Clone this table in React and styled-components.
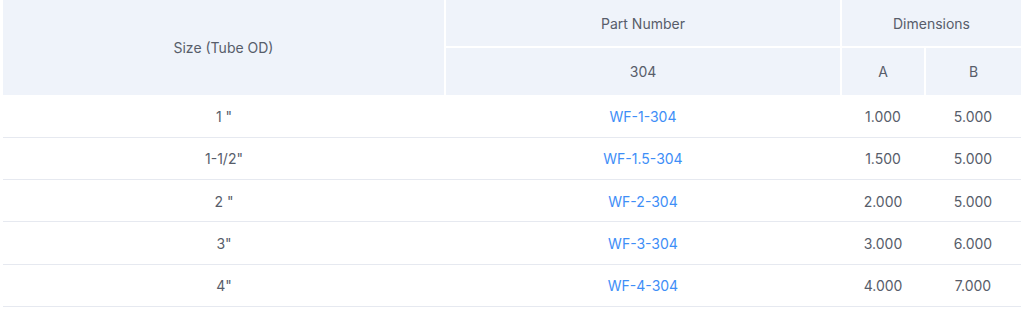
import React from "react";
import styled, { createGlobalStyle } from "styled-components";

const Global = createGlobalStyle`
  html, body { margin: 0; padding: 0; background: #fff; }
  body { font-family: "Inter", "Open Sans", "Liberation Sans", sans-serif; }
`;

const Wrap = styled.div`
  padding: 0 3px;
`;

const Table = styled.table`
  width: 1018px;
  border-collapse: collapse;
  table-layout: fixed;
  font-size: 14px;
  color: #575d6a;
`;

const Col = styled.col`
  width: ${(p) => p.$w}px;
`;

const HeadRow = styled.tr`
  height: ${(p) => p.$h}px;
`;

const HeadCell = styled.th`
  background: #eff3fa;
  font-weight: 400;
  text-align: center;
  padding: 0;
  border: 2px solid #fff;
  border-top-width: ${(p) => (p.$first ? 0 : 2)}px;
  border-bottom-width: ${(p) => (p.$last ? 0 : 2)}px;
  &:first-child { border-left: 0; }
  &:last-child { border-right: 0; }
`;

const Row = styled.tr`
  height: 42.3px;
  border-bottom: 1px solid #e6e9f0;
`;

const Cell = styled.td`
  text-align: center;
  padding: 1px 0 0;
`;

const PartLink = styled.a`
  color: #3e8ef7;
  text-decoration: none;
`;

const rows = [
  ["1 \"", "WF-1-304", "1.000", "5.000"],
  ["1-1/2\"", "WF-1.5-304", "1.500", "5.000"],
  ["2 \"", "WF-2-304", "2.000", "5.000"],
  ["3\"", "WF-3-304", "3.000", "6.000"],
  ["4\"", "WF-4-304", "4.000", "7.000"],
];

export default function App() {
  return (
    <Wrap>
      <Global />
      <Table>
        <colgroup>
          <Col $w={442} />
          <Col $w={396} />
          <Col $w={84} />
          <Col $w={96} />
        </colgroup>
        <thead>
          <HeadRow $h={47}>
            <HeadCell rowSpan={2} $first $last>Size (Tube OD)</HeadCell>
            <HeadCell $first>Part Number</HeadCell>
            <HeadCell colSpan={2} $first>Dimensions</HeadCell>
          </HeadRow>
          <HeadRow $h={48}>
            <HeadCell $last>304</HeadCell>
            <HeadCell $last>A</HeadCell>
            <HeadCell $last>B</HeadCell>
          </HeadRow>
        </thead>
        <tbody>
          {rows.map((r) => (
            <Row key={r[1]}>
              <Cell>{r[0]}</Cell>
              <Cell>
                <PartLink href="#">{r[1]}</PartLink>
              </Cell>
              <Cell>{r[2]}</Cell>
              <Cell>{r[3]}</Cell>
            </Row>
          ))}
        </tbody>
      </Table>
    </Wrap>
  );
}
